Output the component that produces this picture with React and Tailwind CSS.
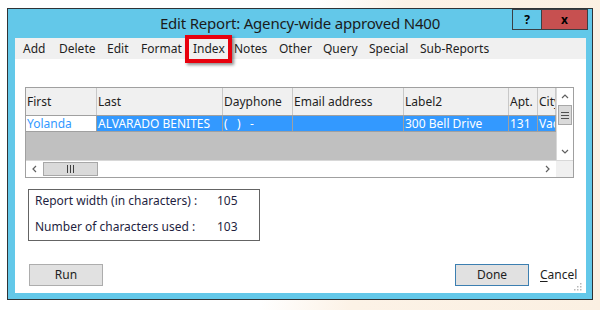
import React from 'react';

const menuItems = [
    ['Add', 36],
    ['Delete', 48],
    ['Edit', 34],
    ['Format', 52],
    ['Index', 41],
    ['Notes', 45],
    ['Other', 44],
    ['Query', 46],
    ['Special', 51],
    ['Sub-Reports', 80],
];

// widths include the right grid line
const columns = [
    ['First', 71],
    ['Last', 126],
    ['Dayphone', 70],
    ['Email address', 111],
    ['Label2', 105],
    ['Apt.', 29],
    ['City', 18],
];

const row = ['Yolanda', 'ALVARADO BENITES', '(   )   -', '', '300 Bell Drive', '131', 'Vacaville'];

const Chevron = ({ dir }) => {
    const pts = {
        left: '5,1 2,4 5,7',
        right: '2,1 5,4 2,7',
        up: '1,5 4,2 7,5',
        down: '1,2 4,5 7,2',
    }[dir];
    return (
        <svg width="8" height="8" viewBox="0 0 8 8">
            <polyline points={pts} fill="none" stroke="#606060" strokeWidth="1.2" />
        </svg>
    );
};

const App = () => {
    return (
        <div className="w-[600px] h-[310px] overflow-hidden pt-[8px] pl-[7px] bg-[linear-gradient(100deg,#ffffff_0%,#ffffff_48%,#fcf2e6_62%,#fbf0e2_100%)] font-['Noto_Sans',sans-serif]">
            <div className="w-[586px] h-[292px] border border-[#2f3336] bg-[#63c8e9] flex flex-col">
                {/* title bar */}
                <div className="relative h-[29px] flex items-center justify-center">
                    <span className="text-[15px] text-[#1b1b1b] tracking-[-0.2px] mt-[-1px]">Edit Report: Agency-wide approved N400</span>
                    <div className="absolute top-0 right-[4px] flex">
                        <div className="w-[29px] h-[21px] border border-[#3a3f44] border-r-0 flex items-center justify-center text-[12px] font-bold text-black">?</div>
                        <div className="w-[47px] h-[21px] border border-[#3a3f44] bg-[#c75050] flex items-center justify-center text-[12px] font-bold text-black">x</div>
                    </div>
                </div>

                {/* client area */}
                <div className="relative ml-[7px] w-[571px] h-[255px] bg-white flex flex-col text-[12px] text-[#1e1e1e]">
                    <div className="relative h-[21px] bg-[#f0f0f0] flex items-center pl-[8px]">
                        {menuItems.map(([label, w]) => (
                            <div key={label} className="shrink-0" style={{ width: w }}>
                                {label}
                            </div>
                        ))}
                        <div className="absolute left-[170px] top-[-3px] w-[47px] h-[28px] border-4 border-[#e8000d] shadow-[2px_2px_3px_rgba(0,0,0,0.45)]"></div>
                    </div>

                    {/* data grid */}
                    <div className="mt-[28px] ml-[10px] w-[549px] border border-[#a0a0a0] flex flex-col">
                        <div className="flex h-[72px]">
                            <div className="w-[530px] flex flex-col bg-[#c0c0c0] overflow-hidden">
                                <div className="flex h-[28px] bg-[#f0f0f0] border-b border-[#a0a0a0]">
                                    {columns.map(([label, w]) => (
                                        <div
                                            key={label}
                                            className="shrink-0 flex items-center pl-[1px] border-r border-[#c8c8c8] overflow-hidden whitespace-nowrap"
                                            style={{ width: w }}
                                        >
                                            {label}
                                        </div>
                                    ))}
                                </div>
                                <div className="flex h-[16px] border-b border-[#a0a0a0]">
                                    {row.map((val, i) => (
                                        <div
                                            key={i}
                                            className={
                                                i === 0
                                                    ? 'shrink-0 pl-[1px] bg-white text-[#3399ff] border-r border-[#a0a0a0] overflow-hidden whitespace-pre leading-[15px]'
                                                    : 'shrink-0 pl-[1px] bg-[#3399ff] text-white border-r border-[#a0a0a0] overflow-hidden whitespace-pre leading-[15px]'
                                            }
                                            style={{ width: columns[i][1] }}
                                        >
                                            {val}
                                        </div>
                                    ))}
                                </div>
                            </div>
                            {/* vertical scrollbar */}
                            <div className="w-[17px] flex flex-col bg-white border-l border-[#d8d8d8]">
                                <div className="h-[17px] flex items-center justify-center">
                                    <Chevron dir="up" />
                                </div>
                                <div className="h-[20px] mx-[1px] bg-[#dadada] border border-[#a8a8a8] flex items-center justify-center">
                                    <svg width="8" height="7" viewBox="0 0 8 7">
                                        <path d="M0 0.5H8M0 3.5H8M0 6.5H8" stroke="#505050" strokeWidth="1" />
                                    </svg>
                                </div>
                                <div className="flex-1"></div>
                                <div className="h-[17px] flex items-center justify-center">
                                    <Chevron dir="down" />
                                </div>
                            </div>
                        </div>
                        {/* horizontal scrollbar */}
                        <div className="flex h-[17px] border-t border-[#d8d8d8]">
                            <div className="w-[530px] flex bg-white">
                                <div className="w-[17px] flex items-center justify-center">
                                    <Chevron dir="left" />
                                </div>
                                <div className="w-[55px] my-[1px] bg-[#dadada] border border-[#a8a8a8] flex items-center justify-center">
                                    <svg width="7" height="8" viewBox="0 0 7 8">
                                        <path d="M0.5 0V8M3.5 0V8M6.5 0V8" stroke="#404040" strokeWidth="1" />
                                    </svg>
                                </div>
                                <div className="flex-1"></div>
                                <div className="w-[17px] flex items-center justify-center">
                                    <Chevron dir="right" />
                                </div>
                            </div>
                            <div className="w-[17px] bg-[#f0f0f0]"></div>
                        </div>
                    </div>

                    {/* info box */}
                    <div className="mt-[11px] ml-[13px] w-[232px] h-[52px] border border-[#646464] pt-[3px] pl-[6px] flex flex-col gap-[10px] text-[#1f1f3f]">
                        <div className="flex h-[16px] items-center">
                            <div className="w-[182px]">Report width (in characters) :</div>
                            <div>105</div>
                        </div>
                        <div className="flex h-[16px] items-center">
                            <div className="w-[182px]">Number of characters used :</div>
                            <div>103</div>
                        </div>
                    </div>

                    {/* buttons */}
                    <div className="mt-[23px] flex items-center">
                        <div className="ml-[14px] w-[74px] h-[22px] bg-[#e1e1e1] border border-[#adadad] flex items-center justify-center">Run</div>
                        <div className="ml-[352px] w-[74px] h-[22px] bg-[#e1e1e1] border border-[#3c7fb1] flex items-center justify-center">Done</div>
                        <div className="ml-[11px]">
                            <span className="underline underline-offset-2">C</span>ancel
                        </div>
                    </div>

                    <svg className="absolute right-[4px] bottom-[2px]" width="8" height="8" viewBox="0 0 8 8">
                        <rect x="6" y="0" width="1.5" height="1.5" fill="#b8b8b8" />
                        <rect x="3" y="3" width="1.5" height="1.5" fill="#b8b8b8" />
                        <rect x="6" y="3" width="1.5" height="1.5" fill="#b8b8b8" />
                        <rect x="0" y="6" width="1.5" height="1.5" fill="#b8b8b8" />
                        <rect x="3" y="6" width="1.5" height="1.5" fill="#b8b8b8" />
                        <rect x="6" y="6" width="1.5" height="1.5" fill="#b8b8b8" />
                    </svg>
                </div>
            </div>
        </div>
    );
};

export default App;
